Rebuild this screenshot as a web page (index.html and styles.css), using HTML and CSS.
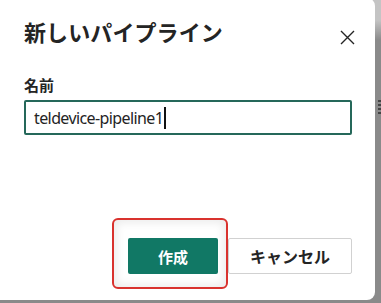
FILE: index.html
```html
<!DOCTYPE html>
<html lang="ja">
<head>
<meta charset="utf-8">
<link rel="stylesheet" href="styles.css">
</head>
<body>
<div class="dialog">
  <div class="header">
    <h1 class="title">新しいパイプライン</h1>
    <button class="close" aria-label="閉じる">
      <svg width="15" height="15" viewBox="0 0 15 15"><path d="M1 1L14 14M14 1L1 14" stroke="#242424" stroke-width="1.4" fill="none"/></svg>
    </button>
  </div>
  <label class="label">名前</label>
  <div class="input"><span class="value">teldevice-pipeline1</span><span class="caret"></span></div>
  <div class="footer">
    <div class="create-wrap">
      <button class="btn primary">作成</button>
      <div class="highlight"></div>
    </div>
    <button class="btn secondary">キャンセル</button>
  </div>
</div>
<div class="bg-marks"></div>
</body>
</html>
```
FILE: styles.css
```css
html, body {
  margin: 0;
  padding: 0;
}
body {
  width: 381px;
  height: 303px;
  overflow: hidden;
  background: linear-gradient(#c4c4c4 0 20px, #8a8a8a 40px);
  font-family: "Noto Sans", "Noto Sans CJK JP", sans-serif;
  color: #242424;
  position: relative;
}
.dialog {
  box-sizing: border-box;
  width: 375px;
  height: 302px;
  margin-top: -2px;
  background: #fff;
  border-radius: 0 8px 8px 0;
  padding: 18px 23px 0 24px;
  display: flex;
  flex-direction: column;
}
.header {
  display: flex;
  align-items: center;
  justify-content: space-between;
  height: 30px;
}
.title {
  margin: 0;
  font-family: "Noto Sans CJK JP", sans-serif;
  font-size: 22px;
  font-weight: 700;
  line-height: 30px;
  letter-spacing: 0.1px;
}
.close {
  border: 0;
  background: none;
  padding: 0;
  margin: 12px -3px 0 0;
  width: 15px;
  height: 15px;
  display: flex;
}
.label {
  margin-top: 29px;
  font-family: "Noto Sans CJK JP", sans-serif;
  font-size: 15px;
  font-weight: 700;
  line-height: 20px;
}
.input {
  box-sizing: border-box;
  margin-top: 5px;
  height: 35px;
  border: 2px solid #25685a;
  border-radius: 2px;
  padding: 0 8px;
  display: flex;
  align-items: center;
  font-size: 16px;
  letter-spacing: -0.6px;
  color: #242424;
}
.caret {
  width: 1.5px;
  height: 22px;
  background: #111;
  margin-left: 1px;
}
.footer {
  margin-top: 103px;
  display: flex;
  justify-content: flex-end;
  gap: 10px;
}
.create-wrap {
  position: relative;
  display: flex;
}
.btn {
  box-sizing: border-box;
  height: 36px;
  border-radius: 2px;
  font-family: "Noto Sans CJK JP", sans-serif;
  font-size: 15px;
  font-weight: 700;
  padding: 0;
  position: relative;
  z-index: 1;
}
.primary {
  width: 90px;
  background: #117865;
  color: #fff;
  border: 0;
}
.secondary {
  width: 124px;
  background: #fff;
  color: #242424;
  border: 1px solid #d1d1d1;
  font-size: 16px;
}
.highlight {
  position: absolute;
  left: -16px;
  top: -20px;
  width: 116px;
  height: 71px;
  box-sizing: border-box;
  border: 2px solid #d9322e;
  border-radius: 6px;
  box-shadow: inset 0 0 8px 3px rgba(0,0,0,0.08);
  z-index: 2;
  pointer-events: none;
}
.bg-marks {
  position: absolute;
  left: 378px;
  top: 100px;
  width: 3px;
  height: 16px;
  background: repeating-linear-gradient(#444 0 2px, #8a8a8a 2px 4px);
}
```
